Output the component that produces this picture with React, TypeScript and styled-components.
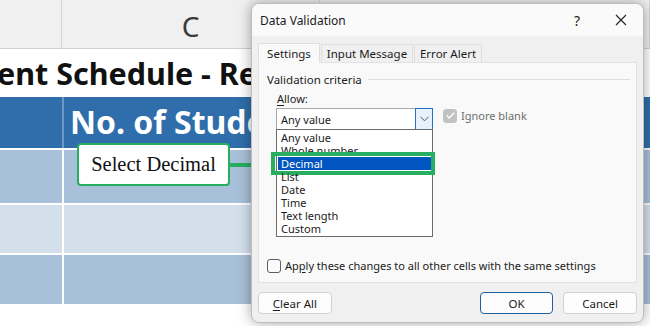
import styled, { createGlobalStyle } from 'styled-components'

const GlobalStyle = createGlobalStyle`
  body {
    margin: 0;
    overflow: hidden;
  }
`

const Page = styled.div`
  background: #fff;
  display: flex;
  flex-direction: column;
  height: 326px;
  overflow: hidden;
  position: relative;
  width: 650px;
`

const ColumnHeader = styled.div`
  background: #f0f0f0;
  border-bottom: 1px solid #cfcfcf;
  display: grid;
  grid-template-columns: 62px 258px 1fr;
  height: 48px;
`

const ColumnCell = styled.div`
  align-items: center;
  border-right: 1px solid #d6d6d6;
  color: #3a3a3a;
  display: flex;
  font-family: 'Noto Sans', sans-serif;
  font-size: 28px;
  justify-content: center;
  padding-top: 4px;
`

const TitleRow = styled.div`
  color: #111;
  font-family: 'Noto Sans', sans-serif;
  font-size: 30.5px;
  font-weight: 700;
  height: 48px;
  line-height: 48px;
  text-indent: -3px;
  white-space: nowrap;
`

const Rows = styled.div`
  display: flex;
  flex-direction: column;
  gap: 2px;
`

const Row = styled.div<{ $height: number; $fill: string; $line: string }>`
  background: ${({ $line }) => $line};
  column-gap: 2px;
  display: grid;
  grid-template-columns: 62px 1fr;
  height: ${({ $height }) => $height}px;

  & > div {
    background: ${({ $fill }) => $fill};
  }
`

const HeaderText = styled.div`
  color: #fff;
  font-family: 'Noto Sans', sans-serif;
  font-size: 32px;
  font-weight: 700;
  line-height: 50px;
  padding-left: 6px;
  white-space: nowrap;
`

const Callout = styled.div`
  align-items: center;
  background: #fff;
  border: 2px solid #27ae60;
  border-radius: 4px;
  box-sizing: border-box;
  color: #111;
  display: flex;
  font-family: 'Liberation Serif', serif;
  font-size: 20.5px;
  height: 43px;
  justify-content: center;
  left: 77px;
  position: absolute;
  top: 143px;
  width: 153px;
`

const Pointer = styled.svg`
  left: 229px;
  position: absolute;
  top: 153px;
`

const Dialog = styled.div`
  background: #f0f0f0;
  border: 1px solid #bdbdbd;
  border-radius: 8px;
  box-shadow: 0 0 14px rgba(0, 0, 0, 0.35);
  box-sizing: border-box;
  color: #1b1b1b;
  display: flex;
  flex-direction: column;
  font-family: 'Noto Sans', sans-serif;
  font-size: 11px;
  height: 320px;
  left: 251px;
  overflow: hidden;
  position: absolute;
  top: 3px;
  width: 393px;
`

const TitleBar = styled.div`
  align-items: center;
  background: #fafafa;
  display: flex;
  flex-shrink: 0;
  font-size: 12px;
  height: 32px;
  padding-left: 8px;
`

const TitleText = styled.div`
  flex-grow: 1;
`

const TitleButton = styled.div`
  align-items: center;
  display: flex;
  font-size: 14px;
  height: 32px;
  justify-content: center;
  width: 44px;
`

const Body = styled.div`
  display: flex;
  flex-direction: column;
  padding: 7px 6px 0 6px;
`

const Tabs = styled.div`
  align-items: flex-end;
  display: flex;
  gap: 1px;
  height: 19px;
`

const Tab = styled.div<{ $active?: boolean; $width: number }>`
  align-items: center;
  background: ${({ $active }) => ($active ? '#f9f9f9' : '#f0f0f0')};
  border: 1px solid #dedede;
  border-bottom: none;
  box-sizing: border-box;
  display: flex;
  font-size: 11.5px;
  height: ${({ $active }) => ($active ? '20px' : '18px')};
  justify-content: center;
  margin-bottom: ${({ $active }) => ($active ? '-1px' : '0')};
  position: relative;
  width: ${({ $width }) => $width}px;
  z-index: ${({ $active }) => ($active ? 2 : 0)};
`

const Panel = styled.div`
  background: #f9f9f9;
  border: 1px solid #e2e2e2;
  box-sizing: border-box;
  display: flex;
  flex-direction: column;
  height: 221px;
  padding: 0 8px 9px 8px;
  position: relative;
  z-index: 1;
`

const Section = styled.div`
  align-items: center;
  display: flex;
  font-size: 11.5px;
  gap: 6px;
  height: 14px;
  margin-top: 9px;

  &::after {
    background: #dcdcdc;
    content: '';
    flex-grow: 1;
    height: 1px;
    margin-right: -2px;
  }
`

const FieldLabel = styled.div`
  line-height: 14px;
  margin: 6px 0 0 10px;
`

const FieldRow = styled.div`
  align-items: flex-start;
  display: flex;
  gap: 10px;
  margin: 2px 0 0 9px;
`

const ComboWrap = styled.div`
  position: relative;
  width: 157px;
`

const Combo = styled.div`
  align-items: center;
  background: #fff;
  border: 1px solid #a8a8a8;
  box-sizing: border-box;
  display: flex;
  height: 22px;
  padding-left: 4px;
`

const ComboText = styled.div`
  flex-grow: 1;
`

const ComboButton = styled.div`
  align-items: center;
  background: #e5f1fb;
  border: 1px solid #2a6fc0;
  box-sizing: border-box;
  display: flex;
  height: 22px;
  justify-content: center;
  margin: -1px -1px -1px 0;
  width: 18px;
`

const List = styled.div`
  background: #fff;
  border: 1px solid #6b6b6b;
  box-sizing: border-box;
  left: 0;
  padding: 1px 1px;
  position: absolute;
  right: 0;
  top: 21px;
  z-index: 3;
`

const Item = styled.div<{ $selected?: boolean }>`
  background: ${({ $selected }) => ($selected ? '#0055c0' : 'transparent')};
  color: ${({ $selected }) => ($selected ? '#fff' : '#1b1b1b')};
  height: 13px;
  line-height: 13px;
  padding-left: 3px;
  position: relative;

  ${({ $selected }) =>
    $selected &&
    `
    &::after {
      border: 4px solid #27ae60;
      bottom: -5px;
      content: '';
      left: -7px;
      position: absolute;
      right: -4px;
      top: -5px;
    }
  `}
`

const CheckRow = styled.label<{ $disabled?: boolean }>`
  align-items: center;
  color: ${({ $disabled }) => ($disabled ? '#6e6e6e' : '#1b1b1b')};
  display: flex;
  gap: 4px;
`

const Box = styled.span<{ $checked?: boolean }>`
  align-items: center;
  background: ${({ $checked }) => ($checked ? '#c2c2c2' : '#fbfbfb')};
  border: 1px solid ${({ $checked }) => ($checked ? '#c2c2c2' : '#5f5f5f')};
  border-radius: 3px;
  box-sizing: border-box;
  display: flex;
  height: 14px;
  justify-content: center;
  width: 14px;
`

const ApplyRow = styled(CheckRow)`
  margin-top: auto;
`

const Buttons = styled.div`
  display: flex;
  margin-top: 9px;
`

const Button = styled.div<{ $primary?: boolean; $gap: number }>`
  align-items: center;
  background: #fdfdfd;
  border: 1px solid ${({ $primary }) => ($primary ? '#1f5f9f' : '#d0d0d0')};
  border-radius: 4px;
  box-sizing: border-box;
  display: flex;
  font-size: 11.5px;
  height: 22px;
  justify-content: center;
  margin-left: ${({ $gap }) => $gap}px;
  width: 74px;
`

const U = styled.span`
  text-decoration: underline;
  text-underline-offset: 2px;
`

const options = ['Any value', 'Whole number', 'Decimal', 'List', 'Date', 'Time', 'Text length', 'Custom']

const dataRows = [
  { height: 53, fill: '#a8c0d9' },
  { height: 48, fill: '#d3e0ec' },
  { height: 49, fill: '#a8c0d9' },
]

export default function App() {
  return (
    <Page>
      <GlobalStyle />
      <ColumnHeader>
        <ColumnCell />
        <ColumnCell>C</ColumnCell>
        <ColumnCell />
      </ColumnHeader>
      <TitleRow>ent Schedule - Report</TitleRow>
      <Rows>
        <Row $height={51} $fill="#2f6eab" $line="#6d97c4">
          <div />
          <HeaderText>No. of Students</HeaderText>
        </Row>
        {dataRows.map((r, i) => (
          <Row key={i} $height={r.height} $fill={r.fill} $line="#fff">
            <div />
            <div />
          </Row>
        ))}
      </Rows>

      <Callout>Select Decimal</Callout>
      <Pointer width="44" height="24" viewBox="0 0 44 24">
        <rect x="0" y="10" width="28" height="4" fill="#27ae60" />
        <polygon points="26,2 43,12 26,22" fill="#27ae60" />
      </Pointer>

      <Dialog>
        <TitleBar>
          <TitleText>Data Validation</TitleText>
          <TitleButton>?</TitleButton>
          <TitleButton>
            <svg width="12" height="12" viewBox="0 0 12 12">
              <path d="M1 1 L11 11 M11 1 L1 11" stroke="#222" strokeWidth="1.1" />
            </svg>
          </TitleButton>
        </TitleBar>
        <Body>
          <Tabs>
            <Tab $active $width={62}>Settings</Tab>
            <Tab $width={92}>Input Message</Tab>
            <Tab $width={68}>Error Alert</Tab>
          </Tabs>
          <Panel>
            <Section>Validation criteria</Section>
            <FieldLabel>
              <U>A</U>llow:
            </FieldLabel>
            <FieldRow>
              <ComboWrap>
                <Combo>
                  <ComboText>Any value</ComboText>
                  <ComboButton>
                    <svg width="9" height="6" viewBox="0 0 9 6">
                      <path d="M0.5 0.8 L4.5 4.8 L8.5 0.8" fill="none" stroke="#555" strokeWidth="1" />
                    </svg>
                  </ComboButton>
                </Combo>
                <List>
                  {options.map((o) => (
                    <Item key={o} $selected={o === 'Decimal'}>
                      {o}
                    </Item>
                  ))}
                </List>
              </ComboWrap>
              <CheckRow $disabled>
                <Box $checked>
                  <svg width="9" height="7" viewBox="0 0 9 7">
                    <path d="M0.8 3.5 L3.3 6 L8.2 0.8" fill="none" stroke="#fff" strokeWidth="1.3" />
                  </svg>
                </Box>
                Ignore blank
              </CheckRow>
            </FieldRow>
            <ApplyRow>
              <Box />
              <span>
                Ap<U>p</U>ly these changes to all other cells with the same settings
              </span>
            </ApplyRow>
          </Panel>
          <Buttons>
            <Button $gap={0}>
              <span>
                <U>C</U>lear All
              </span>
            </Button>
            <Button $primary $gap={148}>OK</Button>
            <Button $gap={10}>Cancel</Button>
          </Buttons>
        </Body>
      </Dialog>
    </Page>
  )
}
